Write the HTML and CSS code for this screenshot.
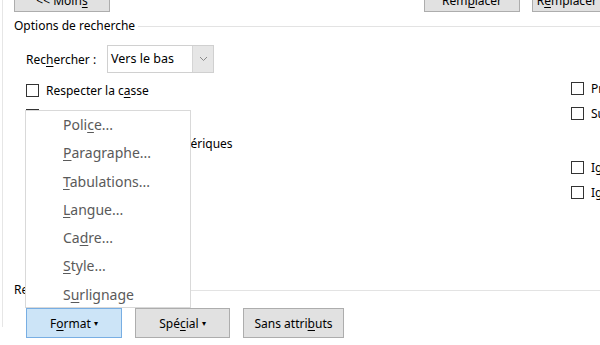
FILE: index.html
```html
<!DOCTYPE html>
<html lang="fr">
<head>
    <meta charset="UTF-8">
    <meta name="viewport" content="width=device-width">
    <title>Rechercher et remplacer</title>
    <link rel="stylesheet" href="styles.css">
</head>
<body>
    <div class="dialog">
        <div class="actions">
            <button class="btn btn-top">&lt;&lt; Moin<u>s</u></button>
            <span class="spacer"></span>
            <button class="btn btn-top">Rem<u>p</u>lacer</button>
            <button class="btn btn-top">R<u>e</u>mplacer tout</button>
        </div>

        <div class="group-head">
            <span>Options de recherche</span>
            <span class="rule"></span>
        </div>

        <div class="search-row">
            <label class="search-label">Rec<u>h</u>ercher :</label>
            <div class="select">
                <span class="select-value">Vers le bas</span>
                <span class="select-arrow">
                    <svg width="9" height="6" viewBox="0 0 9 6"><polyline points="1,1 4.5,4.5 8,1" fill="none" stroke="#8a8a8a" stroke-width="1"/></svg>
                </span>
            </div>
        </div>

        <div class="options">
            <div class="col col-left">
                <label class="check"><span class="box"></span>Respecter la c<u>a</u>sse</label>
                <label class="check"><span class="box"></span>Mots <u>e</u>ntiers</label>
                <label class="check check-wild"><span class="box"></span>Utiliser les caractères génériques</label>
            </div>
            <div class="col col-right">
                <label class="check"><span class="box"></span>Préfixe</label>
                <label class="check"><span class="box"></span>Suffixe</label>
                <label class="check check-gap"><span class="box"></span>Ignorer la ponctuation</label>
                <label class="check"><span class="box"></span>Ignorer les espaces</label>
            </div>
        </div>

        <div class="group-head group-bottom">
            <span>Rechercher</span>
            <span class="rule"></span>
        </div>

        <div class="bottom-row">
            <button class="btn btn-active">F<u>o</u>rmat <span class="caret">&#9662;</span></button>
            <button class="btn w-special">Spé<u>c</u>ial <span class="caret">&#9662;</span></button>
            <button class="btn w-sans">Sans attri<u>b</u>uts</button>
        </div>
    </div>

    <!-- menu du bouton Format -->
    <ul class="menu">
        <li>Poli<u>c</u>e...</li>
        <li><u>P</u>aragraphe...</li>
        <li><u>T</u>abulations...</li>
        <li><u>L</u>angue...</li>
        <li>Ca<u>d</u>re...</li>
        <li><u>S</u>tyle...</li>
        <li>S<u>u</u>rlignage</li>
    </ul>
</body>
</html>
```

FILE: styles.css
```css
body {
    margin: 0;
    width: 600px;
    height: 345px;
    overflow: hidden;
    position: relative;
    background: #fff;
    color: #000;
    font-family: "Noto Sans", "Open Sans", sans-serif;
    font-size: 12px;
}

u {
    text-decoration-thickness: 1px;
    text-underline-offset: 2px;
}

.dialog {
    margin-left: 2px;
    border-left: 1px solid #e6e6e6;
    padding-left: 11px;
    width: 700px;
    height: 345px;
}

.btn {
    height: 30px;
    width: 96px;
    padding: 0;
    background-color: #e1e1e1;
    border: 1px solid #adadad;
    font-family: inherit;
    font-size: 12px;
    color: #000;
}

.btn-top {
    padding-top: 7px;
}

.actions {
    display: flex;
    gap: 12px;
    margin-top: -18px;
    width: 614px;
}

.spacer {
    flex: 1;
}

.group-head {
    display: flex;
    align-items: center;
    height: 16px;
    margin-top: 6px;
    line-height: 16px;
}

.rule {
    flex: 1;
    border-top: 1px solid #e3e3e3;
    margin-left: 3px;
}

.search-row {
    display: flex;
    align-items: center;
    margin-top: 11px;
    padding-left: 12px;
}

.search-label {
    width: 81px;
}

.select {
    display: flex;
    width: 105px;
    height: 26px;
    border: 1px solid #d0d0d0;
}

.select-value {
    flex: 1;
    padding-left: 3px;
    line-height: 26px;
    font-size: 12.5px;
}

.select-arrow {
    width: 20px;
    display: flex;
    align-items: center;
    justify-content: center;
    background-color: #e6e6e6;
    border-left: 1px solid #d5d5d5;
}

.options {
    display: grid;
    grid-template-columns: 545px 1fr;
    padding-left: 12px;
    margin-top: 4px;
}

.col-left {
    margin-top: 1px;
}

.col-right {
    margin-top: -1px;
}

.check {
    display: flex;
    align-items: center;
    height: 25px;
    white-space: nowrap;
}

.check-wild {
    margin-top: 3px;
}

.check-gap {
    margin-top: 29px;
}

.box {
    width: 11px;
    height: 11px;
    border: 1px solid #333;
    background: #fff;
    margin-right: 7px;
}

.group-bottom {
    margin-top: 77px;
}

.bottom-row {
    display: flex;
    gap: 13px;
    margin-top: 10px;
    padding-left: 12px;
}

.w-special {
    width: 95px;
}

.w-sans {
    width: 101px;
}

.btn-active {
    background-color: #cce4f7;
    border-color: #78aee3;
}

.caret {
    font-size: 8px;
    vertical-align: 2px;
}

.menu {
    position: absolute;
    left: 25px;
    top: 110px;
    width: 164px;
    height: 196px;
    margin: 0;
    padding: 0;
    list-style: none;
    background: #fff;
    border: 1px solid #d9d9d9;
    font-size: 14px;
    color: #5a5a5a;
}

.menu li {
    height: 28.3px;
    line-height: 28.3px;
    padding-left: 37px;
}
```
